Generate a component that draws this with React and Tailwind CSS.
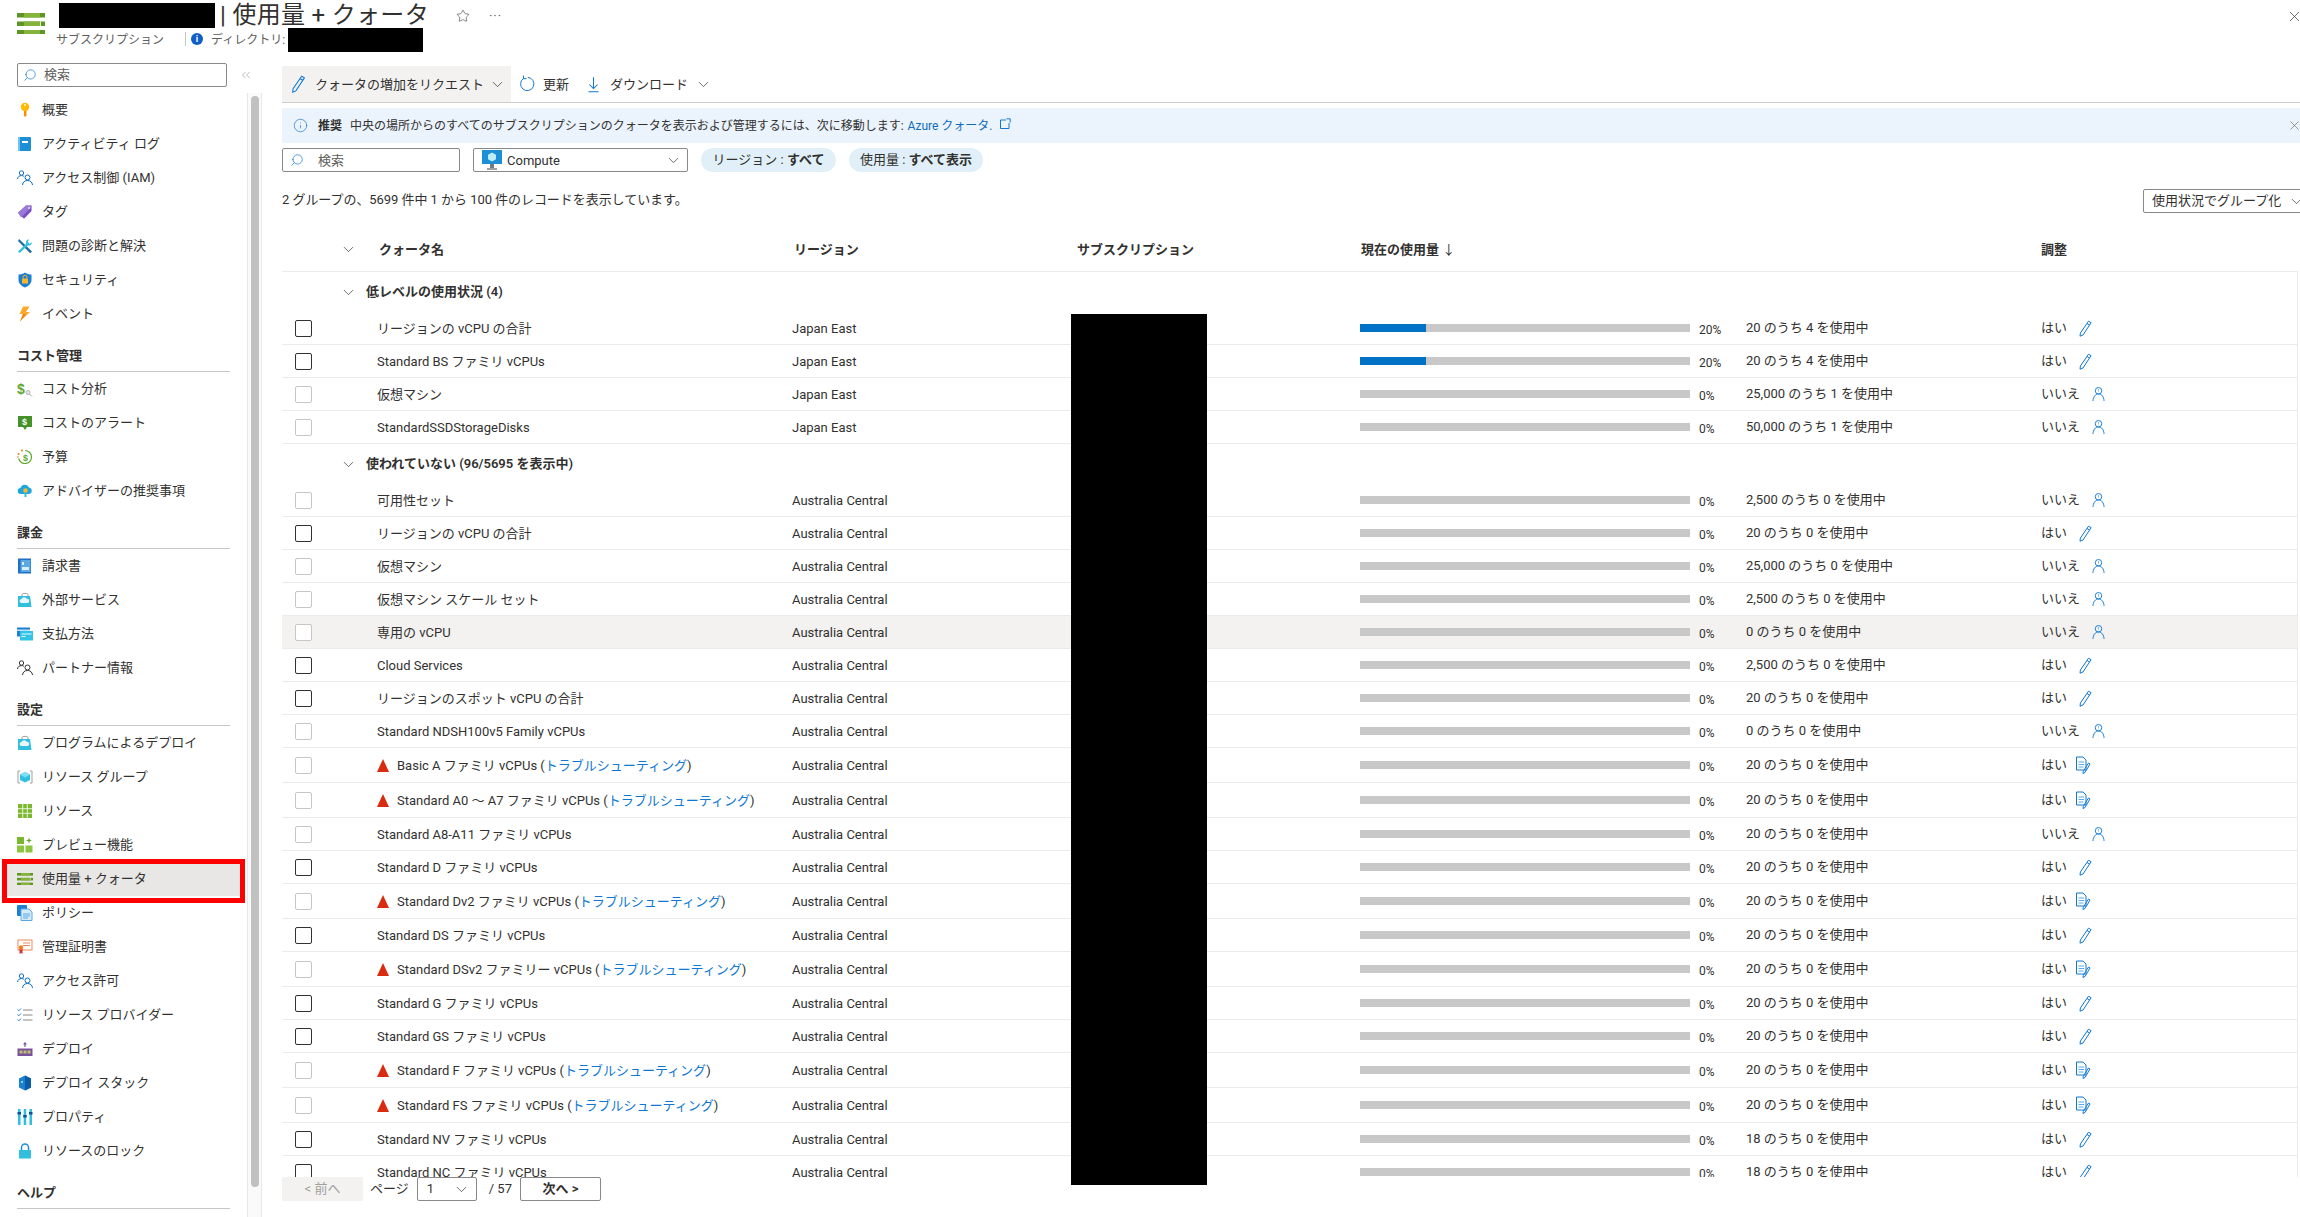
import React from "react";
import { ChevronDown, ChevronsLeft, X, Star, Search, Info } from "lucide-react";

const People = ({ color = "#0f6cbd" }) => (
  <svg viewBox="0 0 16 16" className="w-4 h-4" fill="none" stroke={color} strokeWidth="1">
    <circle cx="4.5" cy="3" r="2.2" />
    <path d="M.5 9c.3-2.2 1.8-3.4 4-3.4 1 0 1.7.2 2.4.7" />
    <circle cx="10.5" cy="7.5" r="2.5" />
    <path d="M5.5 15c.3-2.9 2.2-4.5 5-4.5s4.700 1.600 5 4.500" />
  </svg>
);

const Bag = () => (
  <svg viewBox="0 0 16 16" className="w-4 h-4">
    <path d="M5 4V2.500C5 1 11 1 11 2.500V4" fill="none" stroke="#a19f9d" />
    <path d="M1 4h12l1.500 11H1z" fill="#32bedd" />
    <path d="M4 11a2 2 0 0 1 .5-3.900 2.800 2.800 0 0 1 5.200-.3A2.100 2.100 0 0 1 10.500 11z" fill="#e8f7fb" />
  </svg>
);

const QuotaBars = ({ w = 16 }) => (
  <svg viewBox="0 0 28 21" style={{ width: w }} className="shrink-0">
    <rect x="0" y="0" width="28" height="4.500" fill="#5e9624" />
    <rect x="0" y="8.500" width="28" height="4.500" fill="#5e9624" />
    <rect x="0" y="17" width="28" height="4" fill="#5e9624" />
    <rect x="7" y="0" width="16" height="4.500" fill="#86b33c" />
    <rect x="7" y="8.500" width="16" height="4.500" fill="#86b33c" />
    <rect x="7" y="17" width="16" height="4" fill="#86b33c" />
    <rect x="23" y="8.500" width="1" height="4.500" fill="#e8f0d8" />
  </svg>
);

const navIcons = {
  key: (
    <svg viewBox="0 0 16 16" className="w-4 h-4">
      <path d="M7 8h2.400v5.500L8.200 15 7 13.800z" fill="#ff8c00" />
      <circle cx="8" cy="5" r="4.200" fill="#ffb900" />
      <circle cx="8" cy="3" r="1" fill="#fff2cc" />
    </svg>
  ),
  log: (
    <svg viewBox="0 0 16 16" className="w-4 h-4">
      <rect x="1" y="1" width="13" height="14" rx="1" fill="#1c8fd6" />
      <rect x="1" y="1" width="2" height="14" fill="#6fc3ef" />
      <rect x="5" y="5" width="6" height="2" fill="#fff" />
    </svg>
  ),
  people: <People />,
  tag: (
    <svg viewBox="0 0 16 16" className="w-4 h-4">
      <path d="M9 1.500h5.500V7L7 14.800 1 8.800z" fill="#7a4fc4" />
      <path d="M9 1.500h5.500V3L4 13.500 1 8.800z" fill="#9a7ad8" />
      <circle cx="12" cy="4" r="1" fill="#e8dff7" />
    </svg>
  ),
  tools: (
    <svg viewBox="0 0 16 16" className="w-4 h-4">
      <path d="M2 1l13 12.500-1.800 1.800L1 3z" fill="#1d6f9f" />
      <path d="M12 1.200a3.300 3.300 0 0 0-2.800 4.600L1 13.500 2.700 15l8-7.600A3.300 3.300 0 0 0 15 4.200l-2.200 1.600-2-1.800z" fill="#32bedd" />
    </svg>
  ),
  shield: (
    <svg viewBox="0 0 16 16" className="w-4 h-4">
      <path d="M8 .500C10 2 12.500 2.500 14.500 2.500V8c0 3.500-3 6-6.500 7.500C4.500 14 1.500 11.500 1.500 8V2.500C3.500 2.500 6 2 8 .500z" fill="#1c7fd0" />
      <rect x="5" y="6.500" width="6" height="5" rx=".5" fill="#f8b72a" />
      <path d="M6 6.500V5.200a2 2 0 0 1 4 0v1.300" fill="none" stroke="#f8b72a" />
    </svg>
  ),
  bolt: (
    <svg viewBox="0 0 16 16" className="w-4 h-4">
      <path d="M6 .500h6.500L9 6h4L3 15.500 6 8H2.500z" fill="#fbaa2c" />
      <path d="M6 8h3l-6 7.500z" fill="#ef7f1a" />
    </svg>
  ),
  cost: (
    <svg viewBox="0 0 16 16" className="w-4 h-4">
      <text x="0" y="13" fontSize="14" fontWeight="700" fill="#5ea72e" fontFamily="Liberation Sans">$</text>
      <circle cx="11" cy="11.500" r="2" fill="#e5e5e5" stroke="#b5b5b5" />
      <path d="M12.500 13l2.500 2.500" stroke="#a5a5a5" />
    </svg>
  ),
  alert: (
    <svg viewBox="0 0 16 16" className="w-4 h-4">
      <path d="M1 1h14v11h-5l-2 3-2-3H1z" fill="#45912a" />
      <text x="5" y="10" fontSize="9" fontWeight="700" fill="#fff" fontFamily="Liberation Sans">$</text>
    </svg>
  ),
  budget: (
    <svg viewBox="0 0 16 16" className="w-4 h-4">
      <path d="M8 1.500a6.500 6.500 0 1 1-6.300 8" fill="none" stroke="#5ea72e" strokeWidth="1.200" />
      <text x="6" y="12" fontSize="9" fontWeight="700" fill="#5ea72e" fontFamily="Liberation Sans">$</text>
      <circle cx="5" cy="1.500" r="1" fill="#ef7f1a" />
      <circle cx="1.500" cy="5" r="1" fill="#ef7f1a" />
      <circle cx="1" cy="8" r=".8" fill="#ef7f1a" />
    </svg>
  ),
  advisor: (
    <svg viewBox="0 0 16 16" className="w-4 h-4">
      <path d="M4 11a3 3 0 0 1-.5-6 4.500 4.500 0 0 1 8.500-.5A3.300 3.300 0 0 1 12 11z" fill="#1aa7e0" />
      <circle cx="8.500" cy="7.500" r="2.300" fill="#f8b72a" />
      <rect x="7.500" y="10" width="2" height="4" fill="#32bedd" />
    </svg>
  ),
  invoice: (
    <svg viewBox="0 0 16 16" className="w-4 h-4">
      <rect x="1" y=".500" width="13" height="15" fill="#1f6fc4" />
      <rect x="3.500" y="2" width="10" height="12" fill="#5aa9e6" />
      <rect x="5" y="9" width="7" height="3" fill="#dcefff" />
      <rect x="5" y="4" width="2" height="3" fill="#dcefff" />
    </svg>
  ),
  bag: <Bag />,
  card: (
    <svg viewBox="0 0 16 16" className="w-4 h-4">
      <rect x="0" y="1.500" width="13" height="9" fill="#1f7fd0" />
      <rect x="0" y="3.500" width="13" height="1.500" fill="#bfe3fb" />
      <rect x="3" y="5" width="13" height="9.500" fill="#32c4e6" />
      <rect x="4.500" y="7.500" width="10" height="1" fill="#e8f9fe" />
      <rect x="4.500" y="10" width="4" height="1" fill="#e8f9fe" />
    </svg>
  ),
  partner: <People color="#323130" />,
  rg: (
    <svg viewBox="0 0 16 16" className="w-4 h-4">
      <path d="M3 2H1v12h2M13 2h2v12h-2" fill="none" stroke="#a19f9d" />
      <path d="M8 3l5 2.500v5.500L8 13.500 3 11V5.500z" fill="#32bedd" />
      <path d="M8 8.500l5-3L8 3 3 5.500z" fill="#7fe0f5" />
    </svg>
  ),
  grid: (
    <svg viewBox="0 0 16 16" className="w-4 h-4">
      <rect x="1" y="1" width="14" height="14" fill="#7cb82f" />
      <path d="M5.700 1v14M10.300 1v14M1 5.700h14M1 10.300h14" stroke="#e8f3d8" />
    </svg>
  ),
  preview: (
    <svg viewBox="0 0 16 16" className="w-4 h-4">
      <rect x="0" y="0" width="7" height="7" fill="#7cb82f" />
      <rect x="0" y="8.500" width="7" height="7" fill="#8cc63f" />
      <rect x="8.500" y="8.500" width="7" height="7" fill="#8cc63f" />
      <path d="M12 .500l.8 2.200 2.200.8-2.200.8L12 6.500l-.8-2.200-2.200-.8 2.200-.8z" fill="#5ea72e" />
    </svg>
  ),
  quota: <QuotaBars />,
  policy: (
    <svg viewBox="0 0 16 16" className="w-4 h-4">
      <rect x="0" y="0" width="10" height="11" rx="1" fill="#1f7fd0" />
      <path d="M4 4h8l3 3v8.500H4z" fill="#d6ecfb" stroke="#5aa9e6" />
      <path d="M6 9h7M6 11h7M6 13h5" stroke="#5aa9e6" />
    </svg>
  ),
  cert: (
    <svg viewBox="0 0 16 16" className="w-4 h-4">
      <rect x="1" y="1" width="14" height="10" fill="#fff" stroke="#ef8a5c" />
      <path d="M6 4h7M6 6.500h7" stroke="#ef8a5c" />
      <path d="M2.500 10v5l1.500-1 1.500 1v-5z" fill="#d13438" />
      <circle cx="4" cy="8.500" r="2.200" fill="#ef7f1a" />
    </svg>
  ),
  providers: (
    <svg viewBox="0 0 16 16" className="w-4 h-4" fill="none">
      <path d="M.500 2.500l1.300 1.300L4 1.500M.500 7.500l1.300 1.300L4 6.500M.500 12.500l1.300 1.300L4 11.500" stroke="#1f7fd0" />
      <path d="M6 3h9.500M6 8h9.500M6 13h9.500" stroke="#8a8886" strokeWidth="1.200" />
    </svg>
  ),
  deploy: (
    <svg viewBox="0 0 16 16" className="w-4 h-4">
      <path d="M8 1l2 2.500H8.600V6H7.400V3.500H6z" fill="#7d4f9f" />
      <rect x=".500" y="7.500" width="15" height="7.500" fill="#7d4f9f" />
      <rect x="2.500" y="9.500" width="3" height="3" fill="#b8c56a" />
      <rect x="6.500" y="9.500" width="3" height="3" fill="#b8c56a" />
      <rect x="10.500" y="9.500" width="3" height="3" fill="#b8c56a" />
    </svg>
  ),
  stack: (
    <svg viewBox="0 0 16 16" className="w-4 h-4">
      <path d="M8 .500l6 3v9l-6 3-6-3v-9z" fill="#1c7fd0" />
      <path d="M8 .500l6 3v9l-6 3z" fill="#0b5ca8" />
      <rect x="4" y="6" width="2" height="2" fill="#7fd0f5" />
    </svg>
  ),
  props: (
    <svg viewBox="0 0 16 16" className="w-4 h-4">
      <rect x="1" y="0" width="2.500" height="16" fill="#32bedd" />
      <rect x="6.700" y="0" width="2.500" height="16" fill="#32bedd" />
      <rect x="12.500" y="0" width="2.500" height="16" fill="#32bedd" />
      <rect x=".500" y="3" width="3.500" height="2.500" fill="#0b4f9e" />
      <rect x="6.200" y="6" width="3.500" height="2.500" fill="#0b4f9e" />
      <rect x="12" y="3" width="3.500" height="2.500" fill="#0b4f9e" />
    </svg>
  ),
  lock: (
    <svg viewBox="0 0 16 16" className="w-4 h-4">
      <path d="M4.500 7V4.500a3.500 3.500 0 0 1 7 0V7" fill="none" stroke="#1c8fd6" strokeWidth="1.500" />
      <rect x="2" y="7" width="12" height="8.500" fill="#32bedd" />
    </svg>
  ),
};

const navGroups = [
  {
    items: [
      ["key", "概要"],
      ["log", "アクティビティ ログ"],
      ["people", "アクセス制御 (IAM)"],
      ["tag", "タグ"],
      ["tools", "問題の診断と解決"],
      ["shield", "セキュリティ"],
      ["bolt", "イベント"],
    ],
  },
  {
    title: "コスト管理",
    items: [
      ["cost", "コスト分析"],
      ["alert", "コストのアラート"],
      ["budget", "予算"],
      ["advisor", "アドバイザーの推奨事項"],
    ],
  },
  {
    title: "課金",
    items: [
      ["invoice", "請求書"],
      ["bag", "外部サービス"],
      ["card", "支払方法"],
      ["partner", "パートナー情報"],
    ],
  },
  {
    title: "設定",
    items: [
      ["bag", "プログラムによるデプロイ"],
      ["rg", "リソース グループ"],
      ["grid", "リソース"],
      ["preview", "プレビュー機能"],
      ["quota", "使用量 + クォータ"],
      ["policy", "ポリシー"],
      ["cert", "管理証明書"],
      ["people", "アクセス許可"],
      ["providers", "リソース プロバイダー"],
      ["deploy", "デプロイ"],
      ["stack", "デプロイ スタック"],
      ["props", "プロパティ"],
      ["lock", "リソースのロック"],
    ],
  },
  { title: "ヘルプ", items: [] },
];

const AC = "Australia Central";
const group1 = [
  { name: "リージョンの vCPU の合計", region: "Japan East", pct: 20, usage: "20 のうち 4 を使用中", adj: "pencil", dark: true },
  { name: "Standard BS ファミリ vCPUs", region: "Japan East", pct: 20, usage: "20 のうち 4 を使用中", adj: "pencil", dark: true },
  { name: "仮想マシン", region: "Japan East", pct: 0, usage: "25,000 のうち 1 を使用中", adj: "person" },
  { name: "StandardSSDStorageDisks", region: "Japan East", pct: 0, usage: "50,000 のうち 1 を使用中", adj: "person" },
];
const group2 = [
  { name: "可用性セット", usage: "2,500 のうち 0 を使用中", adj: "person" },
  { name: "リージョンの vCPU の合計", usage: "20 のうち 0 を使用中", adj: "pencil", dark: true },
  { name: "仮想マシン", usage: "25,000 のうち 0 を使用中", adj: "person" },
  { name: "仮想マシン スケール セット", usage: "2,500 のうち 0 を使用中", adj: "person" },
  { name: "専用の vCPU", usage: "0 のうち 0 を使用中", adj: "person", hover: true },
  { name: "Cloud Services", usage: "2,500 のうち 0 を使用中", adj: "pencil", dark: true },
  { name: "リージョンのスポット vCPU の合計", usage: "20 のうち 0 を使用中", adj: "pencil", dark: true },
  { name: "Standard NDSH100v5 Family vCPUs", usage: "0 のうち 0 を使用中", adj: "person" },
  { name: "Basic A ファミリ vCPUs", warn: true, usage: "20 のうち 0 を使用中", adj: "doc" },
  { name: "Standard A0 ～ A7 ファミリ vCPUs", warn: true, usage: "20 のうち 0 を使用中", adj: "doc" },
  { name: "Standard A8-A11 ファミリ vCPUs", usage: "20 のうち 0 を使用中", adj: "person" },
  { name: "Standard D ファミリ vCPUs", usage: "20 のうち 0 を使用中", adj: "pencil", dark: true },
  { name: "Standard Dv2 ファミリ vCPUs", warn: true, usage: "20 のうち 0 を使用中", adj: "doc" },
  { name: "Standard DS ファミリ vCPUs", usage: "20 のうち 0 を使用中", adj: "pencil", dark: true },
  { name: "Standard DSv2 ファミリー vCPUs", warn: true, usage: "20 のうち 0 を使用中", adj: "doc" },
  { name: "Standard G ファミリ vCPUs", usage: "20 のうち 0 を使用中", adj: "pencil", dark: true },
  { name: "Standard GS ファミリ vCPUs", usage: "20 のうち 0 を使用中", adj: "pencil", dark: true },
  { name: "Standard F ファミリ vCPUs", warn: true, usage: "20 のうち 0 を使用中", adj: "doc" },
  { name: "Standard FS ファミリ vCPUs", warn: true, usage: "20 のうち 0 を使用中", adj: "doc" },
  { name: "Standard NV ファミリ vCPUs", usage: "18 のうち 0 を使用中", adj: "pencil", dark: true },
  { name: "Standard NC ファミリ vCPUs", usage: "18 のうち 0 を使用中", adj: "pencil", dark: true },
].map((r) => ({ region: AC, pct: 0, ...r }));

const Pencil = ({ className = "w-[15px] h-[17px]" }) => (
  <svg viewBox="0 0 15 17" className={className} fill="none" stroke="#0f78d4" strokeWidth="1">
    <path d="M10.500 1.200l2.600 1.500L5 15l-3 1.200L2.400 13z" />
    <path d="M9 3.500l2.600 1.500" />
  </svg>
);

const AdjIcon = ({ type }) => {
  if (type === "pencil") return <span className="ml-[11px]"><Pencil /></span>;
  if (type === "person")
    return (
      <svg viewBox="0 0 14 17" className="ml-[12px] w-[13px] h-[16px]" fill="none" stroke="#0f78d4" strokeWidth="1">
        <circle cx="7" cy="5" r="3.500" />
        <path d="M7 3v3" stroke="#7fbbea" />
        <path d="M1 16c.3-4.500 2.500-7.500 6-7.500s5.700 3 6 7.500" />
      </svg>
    );
  return (
    <svg viewBox="0 0 16 18" className="ml-[8px] w-[16px] h-[18px]" fill="none" stroke="#0f78d4" strokeWidth="1">
      <path d="M1.500 1h6.500l3 3v10H1.500z" />
      <path d="M3.500 6h5.500M3.500 8.500h5.500M3.500 11h5" stroke="#5aa9e6" />
      <path d="M13.500 7l1.500 1-5 8.500-2 1 .3-2.300z" />
    </svg>
  );
};

const Chevron = ({ className = "" }) => <ChevronDown size={17} strokeWidth={1} className={`text-[#323130] ${className}`} />;

const QuotaRow = ({ row }) => (
  <div
    className={`grid grid-cols-[95px_415px_279px_289px_339px_47px_295px_1fr] items-center border-b border-[#edebe9] ${row.warn ? "h-[35px]" : "h-[33px]"} ${row.hover ? "bg-[#f3f2f1]" : ""}`}
  >
    <div className="pl-[13px]">
      <div className={`w-[17px] h-[17px] rounded-[2px] bg-white border ${row.dark ? "border-[#323130]" : "border-[#c8c6c4]"}`} />
    </div>
    <div className="flex items-center whitespace-nowrap pt-px">
      {row.warn && (
        <svg viewBox="0 0 12 13" className="w-3 h-[13px] mr-2 shrink-0">
          <path d="M6 0l6 13H0z" fill="#d92b0f" />
        </svg>
      )}
      <span>
        {row.name}
        {row.warn && (
          <>
            {" ("}
            <span className="text-[#0f78d4]">トラブルシューティング</span>)
          </>
        )}
      </span>
    </div>
    <div className="pt-px">{row.region}</div>
    <div />
    <div className="h-2 w-[330px] bg-[#c8c8c8]">
      {row.pct > 0 && <div className="h-2 bg-[#0072c6]" style={{ width: `${row.pct}%` }} />}
    </div>
    <div className="text-[12px] pt-[4px]">{row.pct}%</div>
    <div className="whitespace-nowrap">{row.usage}</div>
    <div className="flex items-center">
      <span>{row.adj === "person" || row.usage.startsWith("0 ") ? "いいえ" : "はい"}</span>
      <AdjIcon type={row.adj} />
    </div>
  </div>
);

const GroupRow = ({ label }) => (
  <div className="h-10 flex items-center pl-[58px]">
    <Chevron />
    <span className="ml-[9px] font-semibold">{label}</span>
  </div>
);

const Sidebar = () => (
  <aside className="w-[282px] shrink-0 flex flex-col min-h-0 pt-[11px]">
    <div className="flex items-center h-6 pl-[17px]">
      <div className="w-[210px] h-6 flex items-center border border-[#8a8886] rounded-[2px] pl-[5px]">
        <Search size={14} strokeWidth={1.2} className="text-[#0f78d4] -scale-x-100" />
        <span className="ml-[7px] text-[#605e5c]">検索</span>
      </div>
      <ChevronsLeft size={14} strokeWidth={1} className="ml-[12px] text-[#8a8886]" />
    </div>
    <div className="flex flex-1 min-h-0 mt-[6px]">
      <nav className="w-[247px] shrink-0">
        {navGroups.map((g, i) => (
          <div key={i}>
            {g.title && (
              <div className="mx-[17px] h-[41px] pt-4 leading-[18px] font-semibold border-b border-[#c8c6c4]">{g.title}</div>
            )}
            {g.items.map(([icon, label]) => {
              const active = label === "使用量 + クォータ";
              return (
                <div key={label} className="relative h-[34px] flex items-center">
                  {active && <div className="absolute left-[7px] right-[7px] inset-y-0 bg-[#e8e7e6]" />}
                  <div className="relative flex items-center gap-[9px] pl-[17px]">
                    {navIcons[icon]}
                    <span className="whitespace-nowrap">{label}</span>
                  </div>
                  {active && <div className="absolute left-[2px] -top-[3px] w-[243px] h-[44px] border-[5px] border-[#ff0000]" />}
                </div>
              );
            })}
          </div>
        ))}
      </nav>
      <div className="w-[15px] shrink-0 bg-[#fafafa] border-x border-[#e8e8e8] pt-[3px] pl-[3px]">
        <div className="w-2 h-[1091px] rounded-[4px] bg-[#c1c1c1]" />
      </div>
    </div>
  </aside>
);

const Toolbar = () => (
  <div className="flex items-center h-[37px] border-b border-[#cccccc]">
    <div className="h-9 w-[229px] bg-[#f3f2f1] flex items-center pl-2">
      <Pencil className="w-[17px] h-[18px]" />
      <span className="ml-2 pt-px">クォータの増加をリクエスト</span>
      <Chevron className="ml-[5px]" />
    </div>
    <svg viewBox="0 0 18 20" className="ml-2 w-4 h-[18px]" fill="none" stroke="#0f78d4" strokeWidth="1.100">
      <path d="M10 2.500a7.500 7.500 0 1 1-4.500 1" />
      <path d="M5 .500v3.500h3.500" />
    </svg>
    <span className="ml-2 pt-px">更新</span>
    <svg viewBox="0 0 12 18" className="ml-[19px] w-[11px] h-[17px]" fill="none" stroke="#0f78d4" strokeWidth="1.100">
      <path d="M6 1v12M1.500 9L6 13.500 10.500 9M.500 17h11" />
    </svg>
    <span className="ml-[11px] pt-px">ダウンロード</span>
    <Chevron className="ml-[7px]" />
  </div>
);

const Banner = () => (
  <div className="mt-[5px] h-[35px] bg-[#ebf3fc] flex items-center pl-[11px] text-[12px]">
    <Info size={15} strokeWidth={1} className="text-[#0f6cbd]" />
    <span className="ml-[10px] font-semibold">推奨</span>
    <span className="ml-2">中央の場所からのすべてのサブスクリプションのクォータを表示および管理するには、次に移動します:</span>
    <span className="ml-1 text-[#0f6cbd]">Azure クォータ.</span>
    <svg viewBox="0 0 12 12" className="ml-[6px] w-3 h-3 -mt-[3px]" fill="none" stroke="#0f78d4">
      <path d="M7 2H1.500v8.500H10V5M7.500 .8h3.700v3.700" />
    </svg>
    <X size={15} strokeWidth={1} className="ml-auto mr-[-2px] text-[#605e5c]" />
  </div>
);

const Filters = () => (
  <div className="mt-[5px] flex items-center">
    <div className="w-[178px] h-6 flex items-center border border-[#8a8886] rounded-[2px] pl-[7px]">
      <Search size={14} strokeWidth={1.2} className="text-[#0f78d4] -scale-x-100" />
      <span className="ml-[14px] pt-px text-[#605e5c]">検索</span>
    </div>
    <div className="ml-[13px] w-[215px] h-6 flex items-center border border-[#8a8886] rounded-[2px] pl-2">
      <svg viewBox="0 0 20 20" className="w-5 h-5 shrink-0">
        <rect x="0" y="0" width="20" height="14" fill="#1c8fd6" />
        <path d="M10 2.500l4 2.200v4.600l-4 2.200-4-2.200V4.700z" fill="#bdeeff" />
        <rect x="8" y="14" width="4" height="4" fill="#7a7a7a" />
        <rect x="5" y="18" width="10" height="2" fill="#a0a0a0" />
      </svg>
      <span className="ml-[5px] pt-px">Compute</span>
      <Chevron className="ml-auto mr-[5px]" />
    </div>
    <div className="ml-[13px] h-6 w-[135px] rounded-full bg-[#e1f0f8] flex items-center justify-center">
      リージョン :&nbsp;<span className="font-semibold">すべて</span>
    </div>
    <div className="ml-[13px] h-6 w-[134px] rounded-full bg-[#e1f0f8] flex items-center justify-center">
      使用量 :&nbsp;<span className="font-semibold">すべて表示</span>
    </div>
  </div>
);

const Pager = () => (
  <div className="h-10 flex items-start shrink-0">
    <div className="w-[81px] h-6 bg-[#f3f2f1] text-[#a19f9d] flex items-center justify-center">&lt; 前へ</div>
    <span className="ml-[7px] leading-6">ページ</span>
    <div className="ml-2 w-[60px] h-6 border border-[#8a8886] rounded-[2px] flex items-center pl-[9px]">
      1
      <Chevron className="ml-auto mr-[6px]" />
    </div>
    <span className="ml-3 leading-6">/ 57</span>
    <div className="ml-2 w-[81px] h-6 border border-[#8a8886] rounded-[2px] flex items-center justify-center font-semibold">次へ &gt;</div>
  </div>
);

export default function App() {
  return (
    <div className="w-[2300px] h-[1217px] overflow-hidden bg-white text-[13px] text-[#323130] flex flex-col font-['Roboto','Noto_Sans_CJK_JP',sans-serif]">
      {/* Header */}
      <header className="h-[52px] shrink-0 flex items-start">
        <div className="pl-[17px] pt-[13px] w-[59px] shrink-0">
          <QuotaBars w={28} />
        </div>
        <div className="pt-[3px]">
          <div className="h-[25px] flex items-center">
            <div className="w-[156px] h-[25px] bg-black" />
            <span className="ml-[5px] text-[24px] leading-[25px] whitespace-nowrap tracking-[0.3px]">| 使用量 + クォータ</span>
            <Star size={14} strokeWidth={1} className="ml-[27px] text-[#323130]" />
            <span className="ml-[19px] text-[#605e5c] leading-none tracking-[1px]">···</span>
          </div>
          <div className="h-6 flex items-start text-[12px] text-[#605e5c]">
            <span className="-ml-[3px] leading-[24px]">サブスクリプション</span>
            <div className="ml-[21px] mt-[4px] h-[14px] border-l border-[#c8c6c4]" />
            <span className="ml-[5px] mt-[5px] w-3 h-3 rounded-full bg-[#0f5fc7] text-white text-[9px] font-bold leading-3 text-center">i</span>
            <span className="ml-[8px] leading-[24px]">ディレクトリ:</span>
            <div className="ml-[3px] w-[135px] h-6 bg-black" />
          </div>
        </div>
        <X size={17} strokeWidth={1} className="ml-auto mt-2 mr-[-3px] text-[#323130]" />
      </header>

      <div className="flex flex-1 min-h-0">
        <Sidebar />
        <main className="relative flex-1 min-w-0 flex flex-col pt-[14px] overflow-hidden">
          <Toolbar />
          <Banner />
          <Filters />
          <div className="mt-[17px] h-6 flex items-center whitespace-nowrap">
            <span className="-mt-[3px] tracking-[-0.05px]">2 グループの、5699 件中 1 から 100 件のレコードを表示しています。</span>
            <div className="ml-auto -mr-[10px] w-[167px] h-6 border border-[#8a8886] rounded-[2px] flex items-center pl-2">
              使用状況でグループ化
              <Chevron className="ml-[7px]" />
            </div>
          </div>

          <div className="mt-[14px] h-[45px] pt-px border-b border-[#edebe9] grid grid-cols-[97px_415px_283px_284px_680px_1fr] items-center font-semibold mr-[2px]">
            <div className="pl-[58px]"><Chevron /></div>
            <div>クォータ名</div>
            <div>リージョン</div>
            <div>サブスクリプション</div>
            <div className="font-semibold">現在の使用量 <span className="font-normal">↓</span></div>
            <div>調整</div>
          </div>

          <div className="flex-1 min-h-0 overflow-hidden mr-[2px] border-r border-[#edebe9]">
            <GroupRow label="低レベルの使用状況 (4)" />
            {group1.map((r, i) => <QuotaRow key={i} row={r} />)}
            <GroupRow label="使われていない (96/5695 を表示中)" />
            {group2.map((r, i) => <QuotaRow key={i} row={r} />)}
          </div>
          <Pager />

          {/* 墨消し */}
          <div className="absolute left-[789px] top-[262px] w-[136px] h-[871px] bg-black" />
        </main>
      </div>
    </div>
  );
}
